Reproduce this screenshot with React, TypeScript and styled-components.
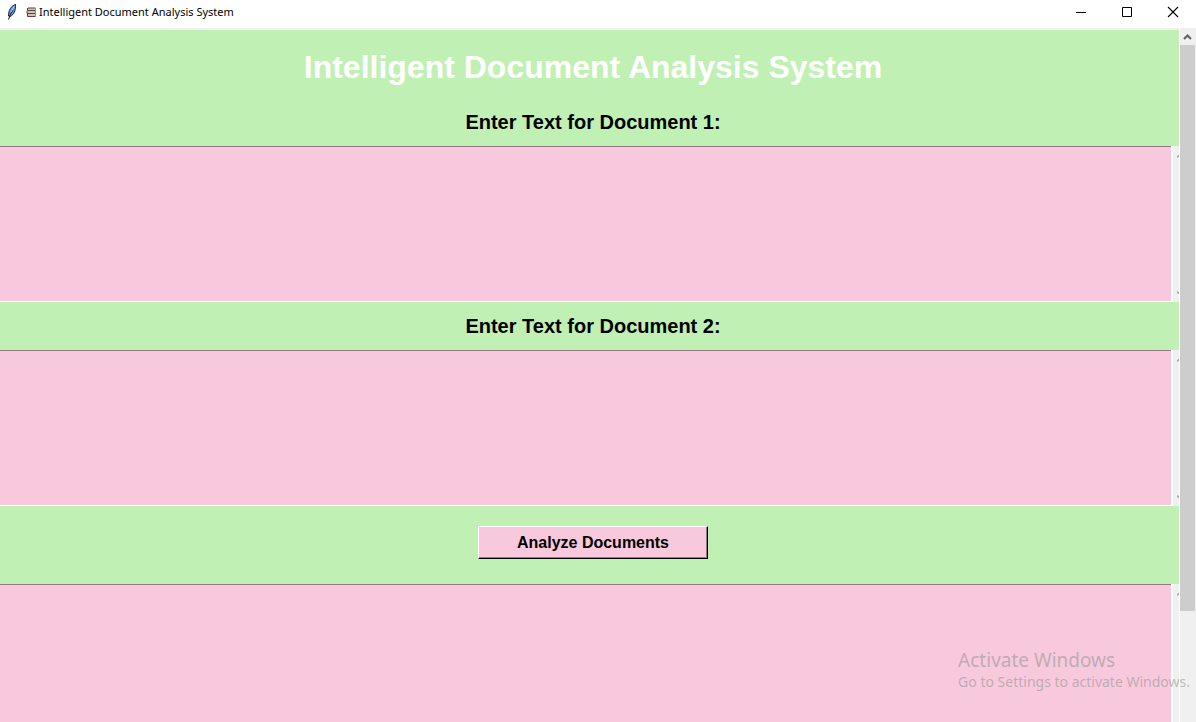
import React from "react";
import styled, { createGlobalStyle } from "styled-components";

const GlobalStyle = createGlobalStyle`
  *, *::before, *::after { box-sizing: border-box; }
  body { margin: 0; overflow: hidden; background: #f0f0f0; }
`;

const uiFont = `"Noto Sans", "Open Sans", sans-serif`;
const formFont = `"Liberation Sans", Arial, sans-serif`;

const Window = styled.div`
  display: flex;
  flex-direction: column;
  height: 100vh;
  overflow: hidden;
  background: #f0f0f0;
`;

const TitleBar = styled.header`
  display: flex;
  align-items: center;
  flex: none;
  height: 28px;
  padding: 0 0 4px 6px;
  background: #fff;
`;

const WindowTitle = styled.span`
  flex: 1;
  margin-left: 3px;
  font: 11px/16px ${uiFont};
  color: #000;
`;

const BookIcon = styled.svg`
  margin-left: 8px;
`;

const CaptionButton = styled.button`
  display: flex;
  align-items: center;
  justify-content: center;
  width: 46px;
  height: 24px;
  padding: 0;
  border: 0;
  background: none;

  svg { overflow: visible; }
`;

const Client = styled.div`
  display: flex;
  flex: 1;
  min-height: 0;
`;

const Viewport = styled.main`
  flex: 1;
  min-width: 0;
  margin-top: 2px;
  overflow: hidden;
  background: #c1f0b5;
`;

/* The form is slightly wider than its viewport, so its right edge is cut off. */
const Form = styled.form`
  display: flex;
  flex-direction: column;
  width: calc(100% + 7px);
  height: 100%;
  font-family: ${formFont};
`;

const Heading = styled.h1`
  flex: none;
  margin: 0;
  padding: 18px 0;
  font-size: 32px;
  line-height: 38px;
  text-align: center;
  color: #fff;
`;

const FieldLabel = styled.label`
  flex: none;
  padding: 0 0 12px;
  font-size: 20px;
  font-weight: bold;
  line-height: 24px;
  text-align: center;
  color: #000;
  margin-top: ${(p: { $gap: number }) => p.$gap}px;
`;

const Field = styled.div<{ $fill?: boolean }>`
  display: flex;
  height: 156px;
  flex: ${(p) => (p.$fill ? "1 0 156px" : "none")};
`;

const TextBox = styled.textarea`
  flex: 1;
  min-width: 0;
  padding: 2px;
  border: 0;
  border-top: 1px solid #957884;
  border-bottom: 1px solid #fff;
  border-radius: 0;
  outline: 0;
  resize: none;
  background: #f8c8dc;
  font: 16px/18px ${formFont};
`;

const InnerScroll = styled.div`
  display: flex;
  flex-direction: column;
  align-items: center;
  justify-content: space-between;
  flex: none;
  width: 15px;
  padding: 8px 0 7px 1px;
  border-left: 2px solid #fff;
  background: #f0f0f0;
`;

const ButtonRow = styled.div`
  display: flex;
  flex: none;
  justify-content: center;
  padding: 20px 0 25px;
`;

const AnalyzeButton = styled.button`
  width: 230px;
  height: 33px;
  padding: 0;
  border: 1px solid;
  border-color: #fff #000 #000 #fff;
  box-shadow: inset -1px -1px #957884;
  background: #f8c8dc;
  color: #000;
  font: bold 16px/20px ${formFont};
`;

const PageScroll = styled.div`
  display: flex;
  flex-direction: column;
  align-items: center;
  flex: none;
  width: 17px;
  padding-right: 1px;
  border-left: 1px solid #fff;
  background: #f0f0f0;
`;

const ScrollArrow = styled.button`
  display: flex;
  align-items: center;
  justify-content: center;
  width: 100%;
  height: 17px;
  padding: 0;
  border: 0;
  background: none;
`;

const Thumb = styled.div`
  width: 100%;
  height: 81.6%;
  background: #cdcdcd;
`;

const Watermark = styled.aside`
  position: absolute;
  right: 6px;
  bottom: 30px;
  color: rgba(146, 150, 148, 0.58);
  font-family: ${uiFont};
  white-space: nowrap;
  pointer-events: none;
`;

const WatermarkTitle = styled.div`
  font-size: 19px;
  line-height: 24px;
`;

const WatermarkText = styled.div`
  font-size: 14px;
  line-height: 20px;
`;

function SmallChevron({ down = false }: { down?: boolean }) {
  return (
    <svg width="6" height="4" viewBox="0 0 6 4" aria-hidden="true">
      <path d={down ? "M0 0v2l3 2 3-2V0L3 2z" : "M0 4V2l3-2 3 2v2L3 2z"} fill="#a8a8a8" />
    </svg>
  );
}

function TextField({ id, label, fill = false }: { id: string; label?: string; fill?: boolean }) {
  return (
    <Field $fill={fill}>
      <TextBox id={id} aria-label={label} />
      <InnerScroll>
        <SmallChevron />
        <SmallChevron down />
      </InnerScroll>
    </Field>
  );
}

export default function App() {
  return (
    <>
      <GlobalStyle />
      <Window>
        <TitleBar>
          <svg width="12" height="18" viewBox="0 0 12 18" aria-hidden="true">
            <path d="M9.500 1.500C5 3 2.500 7 2.500 13L4 13.500C8 12 10 7 9.500 1.500Z" fill="#5c9ade" stroke="#20262e" />
            <path d="M7 7C5 10 3.500 13 2.500 16.500" fill="none" stroke="#101010" />
            <path d="M8 3.500L5 9" stroke="#a9cdf0" />
          </svg>
          <BookIcon width="10" height="10" viewBox="0 0 10 10" aria-hidden="true">
            <path d="M1 1h8v8H1z" fill="#cfc4be" />
            <path d="M2 1h7.500M1.500 1v2.500M1.500 3.500h8M1 4v2.500M1 6.500h8.500M1.500 7v2.500h8" fill="none" stroke="#5c4038" />
            <path d="M9.500 1v8.500" stroke="#a08478" />
          </BookIcon>
          <WindowTitle>Intelligent Document Analysis System</WindowTitle>
          <CaptionButton type="button" aria-label="Minimize">
            <svg width="10" height="10" viewBox="0 0 10 10">
              <path d="M0 5.500h10" stroke="#000" />
            </svg>
          </CaptionButton>
          <CaptionButton type="button" aria-label="Maximize">
            <svg width="10" height="10" viewBox="0 0 10 10">
              <path d="M.5 .5h9v9h-9z" fill="none" stroke="#000" />
            </svg>
          </CaptionButton>
          <CaptionButton type="button" aria-label="Close">
            <svg width="10" height="10" viewBox="0 0 10 10">
              <path d="M0 0l10 10M10 0L0 10" stroke="#000" strokeWidth="1.100" />
            </svg>
          </CaptionButton>
        </TitleBar>
        <Client>
          <Viewport>
            <Form onSubmit={(e) => e.preventDefault()}>
              <Heading>Intelligent Document Analysis System</Heading>
              <FieldLabel htmlFor="doc1" $gap={6}>Enter Text for Document 1:</FieldLabel>
              <TextField id="doc1" />
              <FieldLabel htmlFor="doc2" $gap={12}>Enter Text for Document 2:</FieldLabel>
              <TextField id="doc2" />
              <ButtonRow>
                <AnalyzeButton type="submit">Analyze Documents</AnalyzeButton>
              </ButtonRow>
              <TextField id="result" label="Analysis result" fill />
            </Form>
          </Viewport>
          <PageScroll>
            <ScrollArrow type="button" aria-label="Scroll up">
              <svg width="9" height="6" viewBox="0 0 9 6" aria-hidden="true">
                <path d="M1 5L4.500 1.500 8 5" fill="none" stroke="#606060" strokeWidth="2" />
              </svg>
            </ScrollArrow>
            <Thumb />
          </PageScroll>
        </Client>
        <Watermark>
          <WatermarkTitle>Activate Windows</WatermarkTitle>
          <WatermarkText>Go to Settings to activate Windows.</WatermarkText>
        </Watermark>
      </Window>
    </>
  );
}
